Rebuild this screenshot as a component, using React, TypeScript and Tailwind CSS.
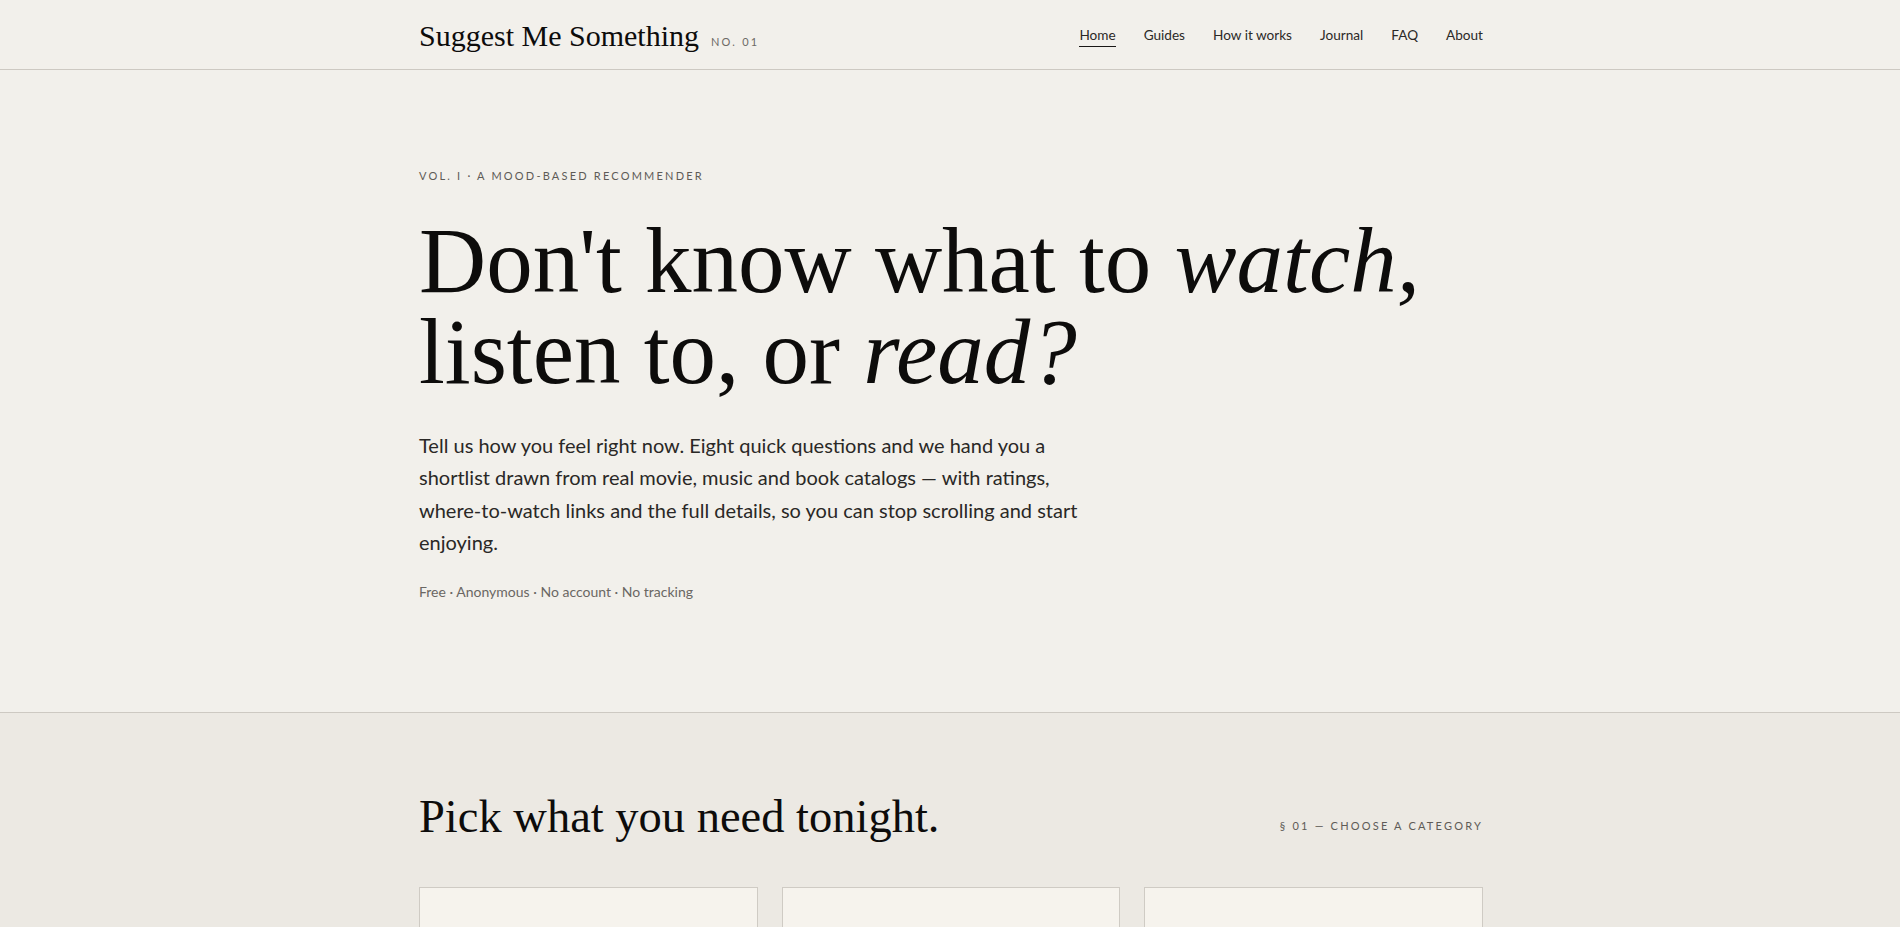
import React from "react";

const sans = "font-['Segoe_UI','Lato','Roboto',sans-serif]";
const serif = "font-['Liberation_Serif','Times_New_Roman',serif]";

const navItems = ["Home", "Guides", "How it works", "Journal", "FAQ", "About"];

const Header = () => (
  <header className="h-[70px] border-b border-[#cdc9c2] bg-[#f2f0eb]">
    <div className="max-w-[1066px] mx-auto pl-[2px] h-full flex items-center justify-between">
      <div className="flex items-baseline gap-3 mt-[2px]">
        <span className={`${serif} text-[30px] text-[#0d0c0b] leading-none`}>Suggest Me Something</span>
        <span className={`${sans} text-[11px] tracking-[0.2em] text-[#6d6a66]`}>NO. 01</span>
      </div>
      <nav className={`${sans} flex items-center gap-7 mt-[2px] text-[13.6px] text-[#2b2927]`}>
        {navItems.map((item, i) => (
          <a
            key={item}
            href="#"
            className={i === 0 ? "border-b border-[#1a1816] mt-px" : ""}
          >
            {item}
          </a>
        ))}
      </nav>
    </div>
  </header>
);

const Hero = () => (
  <section className="bg-[#f2f0eb] border-b border-[#cdc9c2]">
    <div className="max-w-[1066px] mx-auto pl-[2px] pt-[98px] pb-[110px]">
      <p className={`${sans} text-[11px] tracking-[0.2em] text-[#5e5b57]`}>
        VOL. I · A MOOD-BASED RECOMMENDER
      </p>
      <h1 className={`${serif} mt-[30px] text-[93px] leading-[0.985] text-[#0d0c0b]`}>
        Don't know what to <em>watch,</em>
        <br />
        listen to, or <em>read?</em>
      </h1>
      <p className={`${sans} mt-[31px] max-w-[680px] text-[20px] leading-[32.4px] text-[#2a2826]`}>
        Tell us how you feel right now. Eight quick questions and we hand you a shortlist drawn
        from real movie, music and book catalogs — with ratings, where-to-watch links and the full
        details, so you can stop scrolling and start enjoying.
      </p>
      <p className={`${sans} mt-[23px] text-[14px] text-[#6a6763]`}>
        Free · Anonymous · No account · No tracking
      </p>
    </div>
  </section>
);

const Categories = () => (
  <section className="bg-[#ece9e3]">
    <div className="max-w-[1066px] mx-auto pl-[2px] pt-[78px] pb-20">
      <div className="flex items-end justify-between">
        <h2 className={`${serif} text-[46.5px] leading-[1.1] text-[#0d0c0b]`}>Pick what you need tonight.</h2>
        <span className={`${sans} mb-[8px] text-[11px] tracking-[0.2em] text-[#5e5b57]`}>
          § 01 — CHOOSE A CATEGORY
        </span>
      </div>
      <div className="mt-[45px] grid grid-cols-3 gap-6">
        {[0, 1, 2].map((k) => (
          <div key={k} className="h-[320px] bg-[#f6f3ed] border border-[#cfcbc4]" />
        ))}
      </div>
    </div>
  </section>
);

export default function App() {
  return (
    <div className="min-h-screen bg-[#f2f0eb]">
      <Header />
      <Hero />
      <Categories />
    </div>
  );
}
